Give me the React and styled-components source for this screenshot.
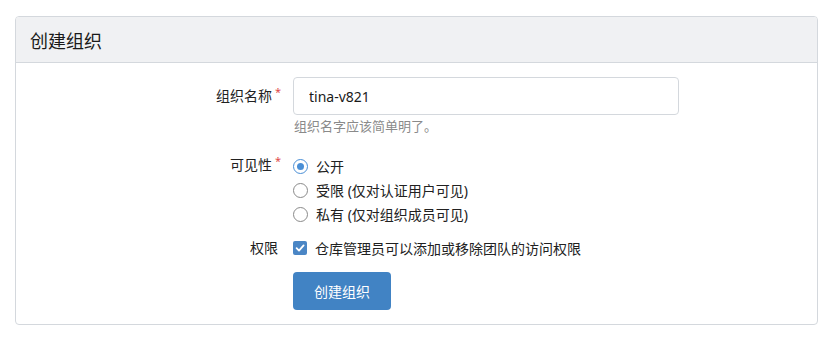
import React, { useState } from 'react';
import styled, { createGlobalStyle } from 'styled-components';

const GlobalStyle = createGlobalStyle`
    body {
        margin: 0;
        background: #fff;
        font-family: 'Noto Sans', 'Noto Sans CJK SC', sans-serif;
        color: #212121;
    }
`;

const Page = styled.div`
    padding: 16px 15px 0 15px;
`;

const Card = styled.div`
    border: 1px solid #d4d8dd;
    border-radius: 4px;
    overflow: hidden;
`;

const CardHeader = styled.h4`
    margin: 0;
    height: 45px;
    padding: 0 14px;
    display: flex;
    align-items: center;
    background: #f0f1f3;
    border-bottom: 1px solid #d4d8dd;
    font-size: 18px;
    font-weight: 400;
    color: #1a1a1a;
`;

const Form = styled.div`
    display: grid;
    grid-template-columns: 265px 1fr;
    column-gap: 12px;
    padding: 14px 0 14px 0;
`;

const Label = styled.div`
    text-align: right;
    font-size: 14px;
    line-height: 22px;
    color: #212121;
    margin-top: ${(p) => p.$top || 0}px;
    &::after {
        content: ${(p) => (p.$required ? "'*'" : "''")};
        color: #e04a4a;
        font-size: 11px;
        margin-left: 3px;
        vertical-align: top;
        position: relative;
        top: -4px;
    }
`;

const Field = styled.div`
    margin-top: ${(p) => p.$top || 0}px;
`;

const TextInput = styled.input`
    box-sizing: border-box;
    width: 386px;
    height: 38px;
    padding: 0 15px;
    font-family: inherit;
    font-size: 14px;
    color: #1a1a1a;
    border: 1px solid #d4d8dd;
    border-radius: 4px;
    outline: none;
`;

const Help = styled.div`
    font-size: 13px;
    line-height: 18px;
    color: #8a8a8a;
    margin-top: 2px;
    margin-left: 1px;
`;

const Option = styled.label`
    display: flex;
    align-items: center;
    gap: 8px;
    height: 24px;
    font-size: 14px;
    color: #212121;
    cursor: pointer;
`;

const Radio = styled.span`
    box-sizing: border-box;
    width: 15px;
    height: 15px;
    border-radius: 50%;
    border: 1px solid ${(p) => (p.$checked ? '#4a8fd6' : '#8a8a8a')};
    display: flex;
    align-items: center;
    justify-content: center;
    &::after {
        content: '';
        width: 7px;
        height: 7px;
        border-radius: 50%;
        background: ${(p) => (p.$checked ? '#4a8fd6' : 'transparent')};
    }
`;

const Check = styled.span`
    box-sizing: border-box;
    width: 14px;
    height: 14px;
    border-radius: 2px;
    background: ${(p) => (p.$checked ? '#4a86c5' : '#fff')};
    border: ${(p) => (p.$checked ? 'none' : '1px solid #8a8a8a')};
    display: flex;
    align-items: center;
    justify-content: center;
`;

const Button = styled.button`
    width: 98px;
    height: 38px;
    border: none;
    border-radius: 4px;
    background: #4183c4;
    color: #fff;
    font-family: inherit;
    font-size: 14px;
    cursor: pointer;
`;

const visibilityOptions = [
    { id: 'public', text: '公开' },
    { id: 'limited', text: '受限 (仅对认证用户可见)' },
    { id: 'private', text: '私有 (仅对组织成员可见)' },
];

const App = () => {
    const [name, setName] = useState('tina-v821');
    const [visibility, setVisibility] = useState('public');
    const [canManage, setCanManage] = useState(true);

    return (
        <Page>
            <GlobalStyle />
            <Card>
                <CardHeader>创建组织</CardHeader>
                <Form>
                    <Label $required $top={8}>组织名称</Label>
                    <Field>
                        <TextInput value={name} onChange={(e) => setName(e.target.value)} />
                        <Help>组织名字应该简单明了。</Help>
                    </Field>

                    <Label $required $top={19}>可见性</Label>
                    <Field $top={19}>
                        {visibilityOptions.map((o) => (
                            <Option key={o.id} onClick={() => setVisibility(o.id)}>
                                <Radio $checked={visibility === o.id} />
                                {o.text}
                            </Option>
                        ))}
                    </Field>

                    <Label $top={11}>权限</Label>
                    <Field $top={10}>
                        <Option onClick={() => setCanManage(!canManage)}>
                            <Check $checked={canManage}>
                                {canManage && (
                                    <svg width="10" height="10" viewBox="0 0 10 10">
                                        <path d="M1.6 5.2 L4 7.6 L8.6 2.4" fill="none" stroke="#fff" strokeWidth="1.8" strokeLinecap="round" strokeLinejoin="round" />
                                    </svg>
                                )}
                            </Check>
                            仓库管理员可以添加或移除团队的访问权限
                        </Option>
                    </Field>

                    <div />
                    <Field $top={12}>
                        <Button>创建组织</Button>
                    </Field>
                </Form>
            </Card>
        </Page>
    );
};

export default App;
